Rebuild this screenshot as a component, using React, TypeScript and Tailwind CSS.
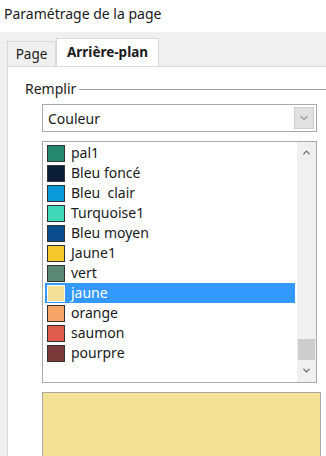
import { ChevronDown, ChevronUp } from "lucide-react";

const colors = [
  { name: "pal1", hex: "#25876b" },
  { name: "Bleu foncé", hex: "#0b1d36" },
  { name: "Bleu  clair", hex: "#0b9ad9" },
  { name: "Turquoise1", hex: "#40d9b8" },
  { name: "Bleu moyen", hex: "#0b4d8c" },
  { name: "Jaune1", hex: "#f5c92c" },
  { name: "vert", hex: "#5b8874" },
  { name: "jaune", hex: "#f3e19a" },
  { name: "orange", hex: "#f5a568" },
  { name: "saumon", hex: "#de5c4d" },
  { name: "pourpre", hex: "#7a3a3a" },
];

const selected = "jaune";

export default function App() {
  return (
    <div
      className="w-[326px] h-[456px] overflow-hidden bg-[#f0f0f0] text-[#1a1a1a] flex flex-col"
      style={{ fontFamily: '"Noto Sans", "Open Sans", sans-serif' }}
    >
      {/* Title */}
      <div className="h-[32px] shrink-0 bg-white px-[4px] pt-[4px] text-[14px] leading-[20px]">
        Paramétrage de la page
      </div>

      {/* Tabs */}
      <div className="flex items-end h-[34px] shrink-0 pl-[7px]">
        <div className="h-[25px] w-[49px] border border-b-0 border-[#d9d9d9] bg-[#f0f0f0] text-[13.5px] leading-[24px] text-center">
          Page
        </div>
        <div className="h-[28px] w-[103px] border border-b-0 border-[#d9d9d9] bg-white text-[13.5px] font-bold leading-[26px] text-center">
          Arrière-plan
        </div>
      </div>

      {/* Panel */}
      <div className="flex-1 ml-[7px] bg-white border-l border-t border-[#d9d9d9] pt-[13px]">
        <div className="flex items-center pl-[17px] h-[18px]">
          <span className="text-[14px] leading-[18px]">Remplir</span>
          <div className="flex-1 ml-[3px] h-0 border-t border-[#a0a0a0]" />
        </div>

        <div className="ml-[34px] mr-[9px] mt-[6px] flex flex-col gap-[9px]">
          {/* Combobox */}
          <div className="h-[28px] border border-[#a9a9a9] flex items-center p-[2px]">
            <span className="flex-1 pl-[3px] text-[14px]">Couleur</span>
            <div className="w-[20px] h-[22px] bg-[#e1e1e1] border border-[#cfcfcf] flex items-center justify-center">
              <ChevronDown size={12} strokeWidth={2} className="text-[#606060]" />
            </div>
          </div>

          {/* Listbox */}
          <div className="h-[242px] border border-[#a9a9a9] flex">
            <div className="flex-1 pt-[1px] pl-[2px] pr-[2px]">
              {colors.map((c) => {
                const isSel = c.name === selected;
                return (
                  <div
                    key={c.name}
                    className={`h-[20px] flex items-center gap-[6px] pl-[2px] ${isSel ? "bg-[#3399ff] text-white" : ""}`}
                  >
                    <span
                      className={`w-[18px] h-[17px] border ${isSel ? "border-white" : "border-[#333333]"}`}
                      style={{ backgroundColor: c.hex }}
                    />
                    <span className="text-[14px] leading-[20px] whitespace-pre">{c.name}</span>
                  </div>
                );
              })}
            </div>
            <div className="w-[19px] bg-[#f0f0f0] flex flex-col items-center">
              <div className="h-[20px] flex items-center justify-center">
                <ChevronUp size={11} strokeWidth={2.5} className="text-[#606060]" />
              </div>
              <div className="flex-1" />
              <div className="w-[17px] h-[21px] bg-[#cdcdcd]" />
              <div className="h-[20px] mb-[2px] flex items-center justify-center">
                <ChevronDown size={11} strokeWidth={2.5} className="text-[#606060]" />
              </div>
            </div>
          </div>

          {/* Preview */}
          <div className="h-[80px] -mr-[4px] border border-[#a9a9a9] bg-[#f3e296]" />
        </div>
      </div>
    </div>
  );
}
